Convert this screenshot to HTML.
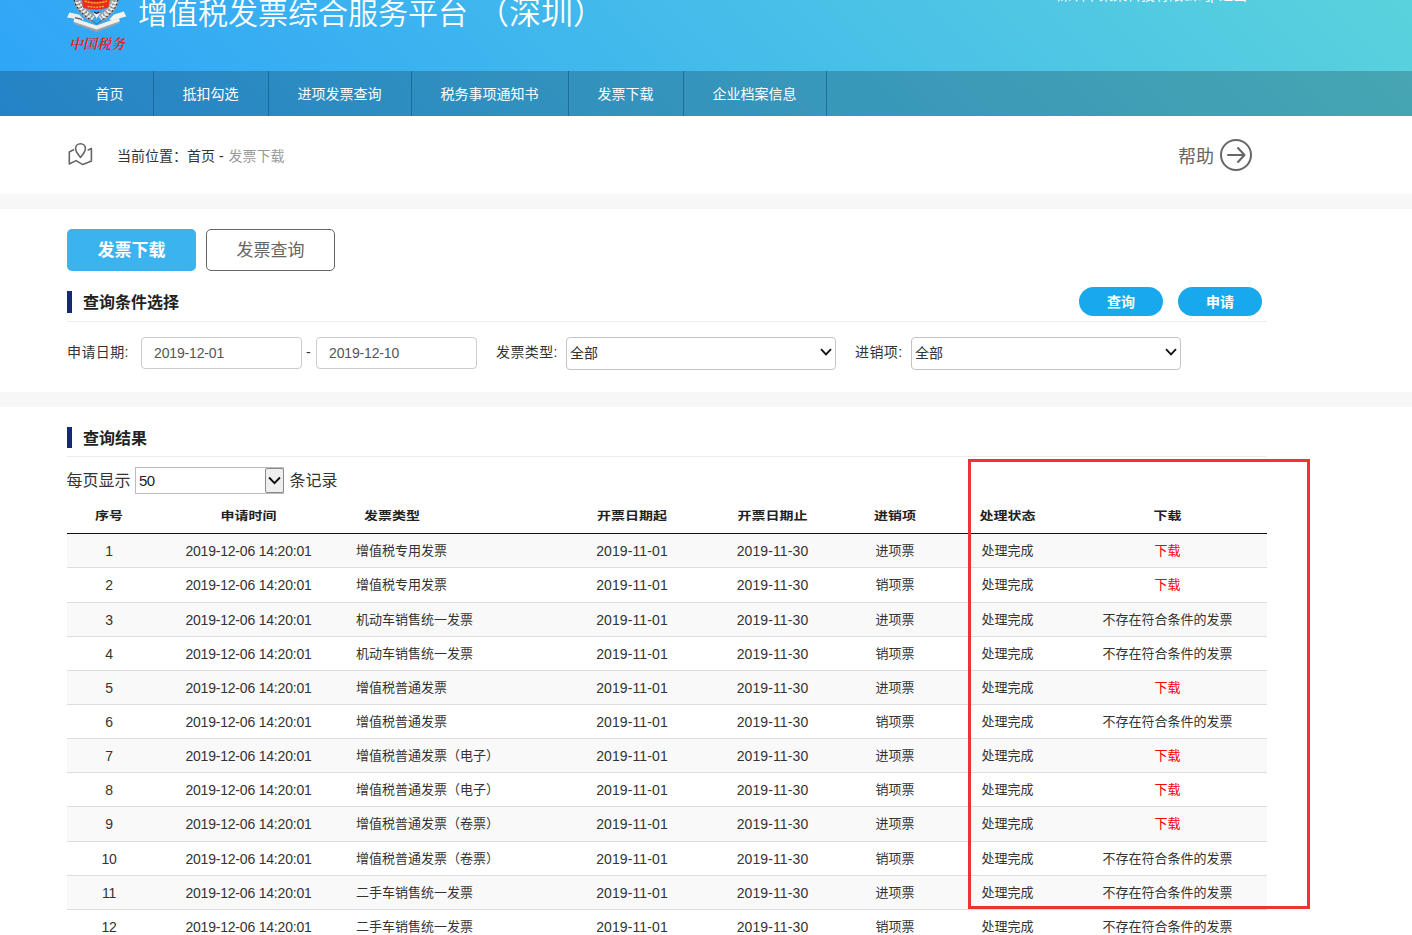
<!DOCTYPE html>
<html lang="zh-CN">
<head>
<meta charset="utf-8">
<title>增值税发票综合服务平台</title>
<style>
*{box-sizing:border-box;margin:0;padding:0}
html,body{width:1412px;height:935px;overflow:hidden;background:#f7f7f7}
body{font-family:"Liberation Sans","Noto Sans CJK SC",sans-serif;font-size:14px;color:#333;position:relative}
.abs{position:absolute}
/* header */
#hd{position:absolute;left:0;top:0;width:1412px;height:116px;overflow:hidden}
#hdbg{position:absolute;left:0;top:-24px;width:1412px;height:140px;background:linear-gradient(45deg,#2ea4f8 0%,#5bd3dc 100%)}
#title{position:absolute;left:138px;top:-6px;font-size:30px;line-height:40px;color:#fff;white-space:nowrap;font-weight:350}
#title2{position:absolute;left:477px;top:-7px;font-size:32px;line-height:40px;color:#fff;white-space:nowrap;font-weight:350}
#user{position:absolute;left:1057px;top:-13px;font-size:14px;line-height:16px;color:#fff;white-space:nowrap}
#cntax{position:absolute;left:69px;top:32px;width:58px;font-family:"Noto Serif CJK SC",serif;font-weight:600;font-style:italic;font-size:14px;line-height:22px;color:#f5160e;white-space:nowrap;letter-spacing:0}
#nav{position:absolute;left:0;top:71px;width:1412px;height:45px;background:rgba(0,0,0,.2)}
#nav ul{list-style:none;position:absolute;left:67px;top:0;height:45px;display:flex}
#nav li{height:45px;line-height:47px;text-indent:-1px;color:#fff;font-size:14px;text-align:center;border-right:1px solid rgba(20,85,135,.62)}
/* breadcrumb */
#bc{position:absolute;left:0;top:116px;width:1412px;height:78px;background:#fff}
#bc .txt{position:absolute;left:117px;top:30px;line-height:20px;font-size:14px;color:#333;white-space:nowrap}
#bc .txt span{color:#999}
#help{position:absolute;left:1178px;top:28.5px;font-size:18px;line-height:24px;color:#666}
/* query */
#q{position:absolute;left:0;top:209px;width:1412px;height:183px;background:#fff}
.tab{position:absolute;top:20px;height:42px;width:129px;border-radius:5px;font-size:17px;line-height:42px;text-align:center}
.tab.on{left:67px;background:#3bb3ef;color:#fff;font-weight:bold;line-height:44px}
.tab.off{left:206px;border:1px solid #666;color:#666;background:#fff}
.sec{position:absolute;left:67px;width:1200px;height:31px;border-bottom:1px solid #ececec}
.sec i{position:absolute;left:0;top:0;width:5px;height:22px;background:#14297c}
.sec b{position:absolute;left:16px;top:1px;font-size:16px;line-height:22px;color:#222;white-space:nowrap}
.pill{position:absolute;top:78px;width:84px;height:29px;border-radius:15px;background:#17a9ec;color:#fff;font-weight:bold;font-size:14px;line-height:31px;text-align:center}
.lbl{position:absolute;top:133px;line-height:20px;letter-spacing:.4px;font-size:14px;color:#333;white-space:nowrap}
.inp{position:absolute;top:128px;height:32px;width:161px;border:1px solid #ccc;border-radius:4px;background:#fff;font-size:14px;line-height:30px;padding-left:12px;color:#555;letter-spacing:-.15px}
.sel{position:absolute;top:128px;height:33px;width:270px;border:1px solid #c4c4c4;border-radius:4px;background:#fff;font-size:14px;line-height:31px;padding-left:3px;color:#333}
.sel svg{position:absolute;right:3px;top:10px}
/* result */
#r{position:absolute;left:0;top:407px;width:1412px;height:528px;background:#fff}
#pg{position:absolute;left:66.5px;top:60px;height:27px;font-size:16px;line-height:27px;color:#333;white-space:nowrap}
#pgsel{position:absolute;left:135px;top:60px;width:149px;height:27px;border:1px solid #bcbcbc;background:#fff;font-size:15px;letter-spacing:-.5px;line-height:26px;padding-left:3px;color:#222}
#pgsel u{position:absolute;right:-1px;top:0;width:19px;height:25px;border:1px solid #8a8a8a;background:#efefef;border-radius:2px}
#pgsel svg{position:absolute;right:2.5px;top:8px;width:13px;height:9px}
table{position:absolute;left:67px;top:90px;width:1200px;border-collapse:collapse;table-layout:fixed}
th{height:36px;font-size:14px;font-weight:bold;color:#222;text-align:center;border-bottom:1px solid #111;vertical-align:middle;padding:0}
th span{display:inline-block;transform:scaleY(.84);transform-origin:50% 50%;position:relative;top:0}
td{font-size:13px;color:#333;text-align:center;border-bottom:1px solid #ddd;vertical-align:middle;padding:0 0 2px 0;white-space:nowrap}
td.n{font-size:14px;letter-spacing:-.2px;padding:1px 0 0 0}
td.d{letter-spacing:.1px}
tr.o td{background:#f9f9f9}
td.l{text-align:left;padding-left:10px}
th.l{text-align:left;padding-left:18px}
td a{color:#f00;text-decoration:none}
#redbox{position:absolute;left:968px;top:459px;width:342px;height:450px;border:3px solid #f03232}
</style>
</head>
<body>
<div id="hd">
  <div id="hdbg"></div>
  <svg class="abs" style="left:60px;top:0" width="75" height="34" viewBox="0 0 75 34">
    <!-- ribbon tails -->
    <path d="M7 17.4 L9.4 12.4 L19 14.6 L24 19.4 L15 21 L13.6 18.6 Z" fill="#ededee"/>
    <path d="M66.2 16.6 L63.8 11.4 L54 14.6 L49 19.4 L58 21 L59.6 18.2 Z" fill="#f4f4f4"/>
    <!-- wreath -->
    <path d="M17.2 -2 Q17.6 8.5 33 18.6" fill="none" stroke="#979b9f" stroke-width="8"/>
    <path d="M55 -2 Q54.6 8.5 40.4 18.6" fill="none" stroke="#a1a5a8" stroke-width="8"/>
    <path d="M17.2 -2 Q17.6 8.5 33 18.6" fill="none" stroke="#eeeeef" stroke-width="5" stroke-dasharray="2.1 1.5"/>
    <path d="M55 -2 Q54.6 8.5 40.4 18.6" fill="none" stroke="#f3f3f3" stroke-width="5" stroke-dasharray="2.1 1.5"/>
    <path d="M14.4 0 Q15.4 9.5 31 20" fill="none" stroke="#25282b" stroke-width="1.2" stroke-dasharray="1.5 2.4"/>
    <path d="M57.8 0 Q56.8 9.5 42.4 20" fill="none" stroke="#25282b" stroke-width="1.2" stroke-dasharray="1.5 2.4"/>
    <path d="M18 1 Q19 8 32.4 16.8" fill="none" stroke="#55595c" stroke-width="1" stroke-dasharray="1.2 2.3"/>
    <path d="M54.2 1 Q53.2 8 41 16.8" fill="none" stroke="#55595c" stroke-width="1" stroke-dasharray="1.2 2.3"/>
    <!-- emblem -->
    <path d="M22 -1 H49.5 L48.4 7.8 Q42 9.4 35.7 9.4 Q29 9.4 23 7.8 Z" fill="#ee2a1c"/>
    <path d="M24.6 1.2 Q35.7 4.6 47 1.2" fill="none" stroke="#f6c431" stroke-width="1.3" stroke-dasharray="2.2 .8"/>
    <path d="M27.5 6.4 Q35.7 8 44 6.4" fill="none" stroke="#f6c431" stroke-width="1.1" stroke-dasharray="2 .9"/>
    <path d="M29 -1 H43 L42.5 .5 Q35.7 1.8 29.5 .5 Z" fill="#c4161a"/>
    <!-- ribbon V -->
    <path d="M14.2 21 L36.6 29 L59 20.4" fill="none" stroke="#9fa3a6" stroke-width="5.4" stroke-linejoin="miter"/>
    <path d="M14 20 L36.6 27.6 L59.2 19.4" fill="none" stroke="#f0f0f0" stroke-width="3.8" stroke-linejoin="miter"/>
    <path d="M30.4 19.6 L36.6 24 L43 19.6" fill="none" stroke="#5f6367" stroke-width="1"/>
    <path d="M15 17.6 L22 19.4" stroke="#55585c" stroke-width="1.2"/>
    <!-- centre -->
    <path d="M33 12.6 H40.4 L36.7 18.4 Z" fill="#f6f6f6"/>
    <path d="M34.2 12 Q36.7 14.4 39.2 12" fill="none" stroke="#1c1c1c" stroke-width="1.3"/>
  </svg>
  <div id="cntax">中国税务</div>
  <div id="title">增值税发票综合服务平台</div>
  <div id="title2">（深圳）</div>
  <div id="user">深圳市某某科技有限公司<span style="position:absolute;left:153px">|</span><span style="position:absolute;left:162px">退出</span></div>
  <div id="nav">
    <ul>
      <li style="width:87px">首页</li>
      <li style="width:115px">抵扣勾选</li>
      <li style="width:143px">进项发票查询</li>
      <li style="width:157px">税务事项通知书</li>
      <li style="width:115px">发票下载</li>
      <li style="width:143px">企业档案信息</li>
    </ul>
  </div>
</div>

<div id="bc">
  <svg class="abs" style="left:67px;top:25px" width="27" height="27" viewBox="0 0 27 27" fill="none" stroke="#666" stroke-width="1.6" stroke-linejoin="round" stroke-linecap="round">
    <path d="M13.5 16.5 C10 12.5 8.6 10.2 8.6 7.6 a4.9 4.9 0 0 1 9.8 0 C18.4 10.2 17 12.5 13.5 16.5 Z"/>
    <path d="M6.5 8.8 L2.3 11 L2.3 23 L9 19.6 L15.8 23.6 L24.4 20 L24.4 7.6 L21.2 8.9"/>
  </svg>
  <div class="txt">当前位置：首页 - <span style="margin-left:1px">发票下载</span></div>
  <div id="help">帮助</div>
  <svg class="abs" style="left:1219px;top:22px" width="34" height="34" viewBox="0 0 34 34" fill="none" stroke="#666" stroke-width="2" stroke-linecap="round" stroke-linejoin="round">
    <circle cx="17" cy="17" r="15"/>
    <path d="M9 17 H25 M19 10 L25.5 17 L19 24"/>
  </svg>
</div>

<div id="q">
  <div class="tab on">发票下载</div>
  <div class="tab off">发票查询</div>
  <div class="sec" style="top:82px"><i></i><b>查询条件选择</b></div>
  <div class="pill" style="left:1079px">查询</div>
  <div class="pill" style="left:1178px">申请</div>
  <div class="lbl" style="left:67px">申请日期:</div>
  <div class="inp" style="left:141px">2019-12-01</div>
  <div class="lbl" style="left:306px">-</div>
  <div class="inp" style="left:316px">2019-12-10</div>
  <div class="lbl" style="left:496px">发票类型:</div>
  <div class="sel" style="left:566px">全部<svg width="12" height="8" viewBox="0 0 12 8"><path d="M1 1.2 L6 6.4 L11 1.2" fill="none" stroke="#111" stroke-width="1.8"/></svg></div>
  <div class="lbl" style="left:855px">进销项:</div>
  <div class="sel" style="left:911px">全部<svg width="12" height="8" viewBox="0 0 12 8"><path d="M1 1.2 L6 6.4 L11 1.2" fill="none" stroke="#111" stroke-width="1.8"/></svg></div>
</div>

<div id="r">
  <div class="sec" style="top:20px;height:30px"><i style="height:21px"></i><b>查询结果</b></div>
  <div id="pg">每页显示<span style="position:absolute;left:223px">条记录</span></div>
  <div id="pgsel">50<u></u><svg width="12" height="8" viewBox="0 0 12 8"><path d="M1 1.2 L6 6.4 L11 1.2" fill="none" stroke="#111" stroke-width="1.8"/></svg></div>
  <table>
    <colgroup><col style="width:84px"><col style="width:195px"><col style="width:216px"><col style="width:140px"><col style="width:141px"><col style="width:104px"><col style="width:121px"><col style="width:199px"></colgroup>
    <thead><tr><th><span>序号</span></th><th><span>申请时间</span></th><th class="l"><span>发票类型</span></th><th><span>开票日期起</span></th><th><span>开票日期止</span></th><th><span>进销项</span></th><th><span>处理状态</span></th><th><span>下载</span></th></tr></thead>
    <tbody>
      <tr class="o" style="height:34px"><td class="n">1</td><td class="n">2019-12-06 14:20:01</td><td class="l">增值税专用发票</td><td class="n d">2019-11-01</td><td class="n d">2019-11-30</td><td>进项票</td><td>处理完成</td><td><a>下载</a></td></tr>
      <tr style="height:35px"><td class="n">2</td><td class="n">2019-12-06 14:20:01</td><td class="l">增值税专用发票</td><td class="n d">2019-11-01</td><td class="n d">2019-11-30</td><td>销项票</td><td>处理完成</td><td><a>下载</a></td></tr>
      <tr class="o" style="height:34px"><td class="n">3</td><td class="n">2019-12-06 14:20:01</td><td class="l">机动车销售统一发票</td><td class="n d">2019-11-01</td><td class="n d">2019-11-30</td><td>进项票</td><td>处理完成</td><td>不存在符合条件的发票</td></tr>
      <tr style="height:34px"><td class="n">4</td><td class="n">2019-12-06 14:20:01</td><td class="l">机动车销售统一发票</td><td class="n d">2019-11-01</td><td class="n d">2019-11-30</td><td>销项票</td><td>处理完成</td><td>不存在符合条件的发票</td></tr>
      <tr class="o" style="height:34px"><td class="n">5</td><td class="n">2019-12-06 14:20:01</td><td class="l">增值税普通发票</td><td class="n d">2019-11-01</td><td class="n d">2019-11-30</td><td>进项票</td><td>处理完成</td><td><a>下载</a></td></tr>
      <tr style="height:34px"><td class="n">6</td><td class="n">2019-12-06 14:20:01</td><td class="l">增值税普通发票</td><td class="n d">2019-11-01</td><td class="n d">2019-11-30</td><td>销项票</td><td>处理完成</td><td>不存在符合条件的发票</td></tr>
      <tr class="o" style="height:34px"><td class="n">7</td><td class="n">2019-12-06 14:20:01</td><td class="l">增值税普通发票（电子）</td><td class="n d">2019-11-01</td><td class="n d">2019-11-30</td><td>进项票</td><td>处理完成</td><td><a>下载</a></td></tr>
      <tr style="height:34px"><td class="n">8</td><td class="n">2019-12-06 14:20:01</td><td class="l">增值税普通发票（电子）</td><td class="n d">2019-11-01</td><td class="n d">2019-11-30</td><td>销项票</td><td>处理完成</td><td><a>下载</a></td></tr>
      <tr class="o" style="height:35px"><td class="n">9</td><td class="n">2019-12-06 14:20:01</td><td class="l">增值税普通发票（卷票）</td><td class="n d">2019-11-01</td><td class="n d">2019-11-30</td><td>进项票</td><td>处理完成</td><td><a>下载</a></td></tr>
      <tr style="height:34px"><td class="n">10</td><td class="n">2019-12-06 14:20:01</td><td class="l">增值税普通发票（卷票）</td><td class="n d">2019-11-01</td><td class="n d">2019-11-30</td><td>销项票</td><td>处理完成</td><td>不存在符合条件的发票</td></tr>
      <tr class="o" style="height:34px"><td class="n">11</td><td class="n">2019-12-06 14:20:01</td><td class="l">二手车销售统一发票</td><td class="n d">2019-11-01</td><td class="n d">2019-11-30</td><td>进项票</td><td>处理完成</td><td>不存在符合条件的发票</td></tr>
      <tr style="height:34px"><td class="n">12</td><td class="n">2019-12-06 14:20:01</td><td class="l">二手车销售统一发票</td><td class="n d">2019-11-01</td><td class="n d">2019-11-30</td><td>销项票</td><td>处理完成</td><td>不存在符合条件的发票</td></tr>
    </tbody>
  </table>
</div>
<div id="redbox"></div>
</body>
</html>
